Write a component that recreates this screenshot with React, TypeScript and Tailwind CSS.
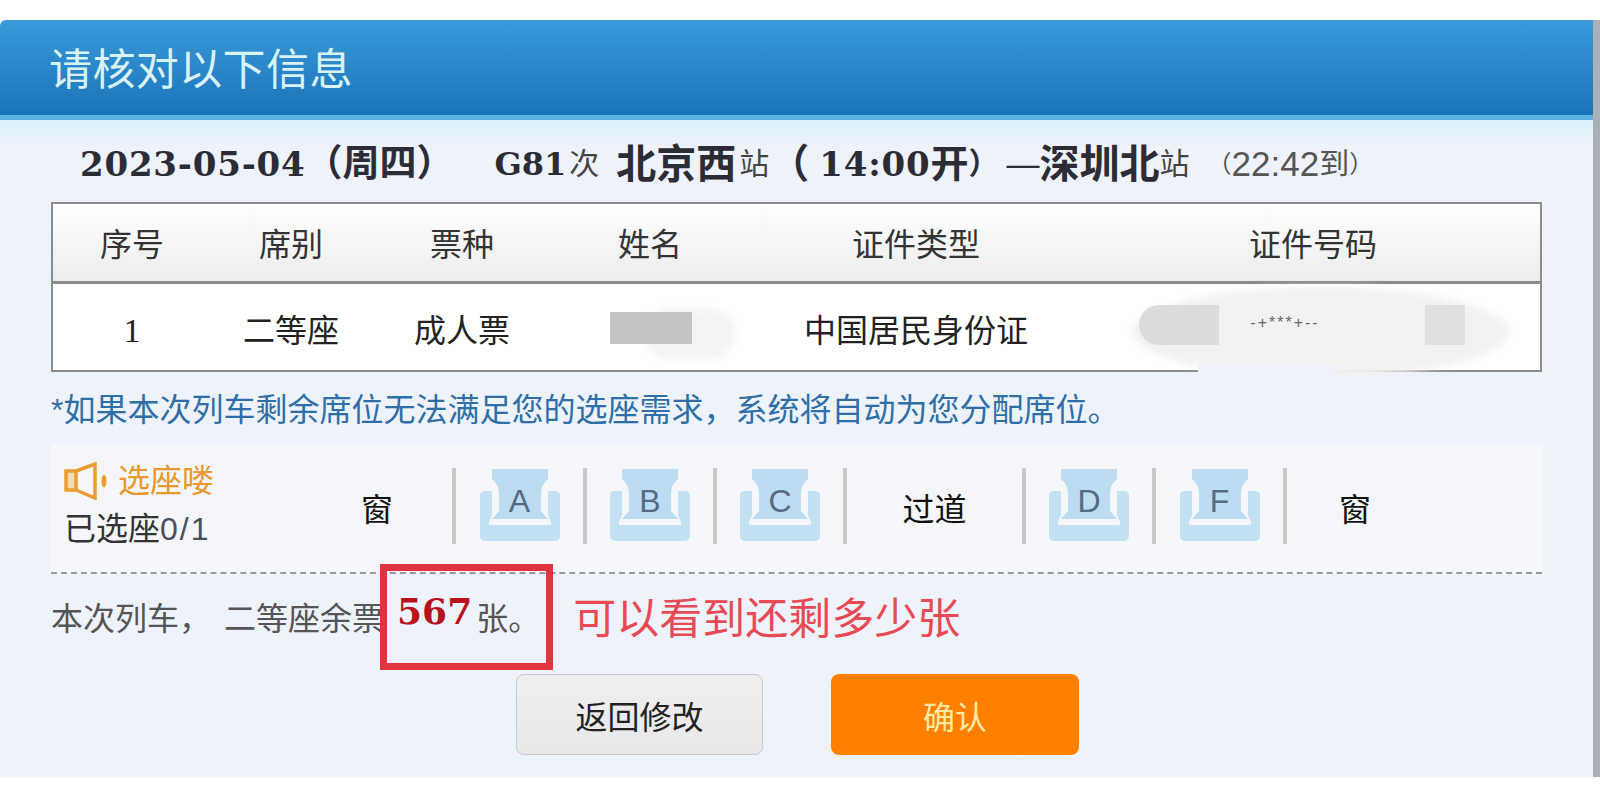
const cjk = "font-['Liberation_Sans','Noto_Sans_CJK_SC',sans-serif]"
const cols = 'grid grid-cols-[158px_160px_182px_194px_338px_456px]'

function Seat({ letter }: { letter: string }) {
  return (
    <div className="relative w-[80px] h-[72px] mb-[7px]">
      <svg width="80" height="72" viewBox="0 0 80 72">
        <path d="M12 0H68V10Q61 16 61 24V42L68 50H12L19 42V24Q19 16 12 10Z" fill="#bcdcf2" />
        <path d="M5 22H12V46L9 53V56H71V53L68 46V22H75Q80 22 80 27V66Q80 72 74 72H6Q0 72 0 66V27Q0 22 5 22Z" fill="#c4e0f3" />
      </svg>
      <span className="absolute left-0 right-0 top-[14px] text-center text-[32px] leading-[36px] text-[#566b82]">{letter}</span>
    </div>
  )
}

function Divider() {
  return <div className="w-[4px] h-[76px] mb-[5px] bg-[#c8c8c8]" />
}

function Speaker() {
  return (
    <svg width="44" height="38" viewBox="0 0 44 38" fill="none" stroke="#eb9c34" strokeWidth="3.5">
      <rect x="2" y="9" width="10" height="19" fill="#f6dcae" />
      <path d="M12 9L31 2V36L12 28" />
      <ellipse cx="40" cy="19" rx="2" ry="6" fill="#eb9c34" strokeWidth="1" />
    </svg>
  )
}

export default function App() {
  return (
    <div className={`h-[800px] overflow-hidden bg-white pt-[20px] text-[32px] leading-[36px] text-[#222] ${cjk}`}>
      <div className="w-full h-[757px] flex border-r-[7px] border-[#aab0b8]">
        <div className="flex-1 flex flex-col bg-[#eef2fa]">
          {/* Title */}
          <div className="h-[95px] shrink-0 flex items-center pl-[49px] pt-[5px] rounded-tl-[6px] bg-gradient-to-b from-[#3a9ad9] to-[#1a74b9] text-[43px] tracking-[0.4px] text-[#d8f2f5]">
            请核对以下信息
          </div>
          <div className="h-[5px] shrink-0 bg-[#5db1e2]" />

          <div className="flex-1 flex flex-col px-[51px] bg-gradient-to-b from-[#d8f1fa] from-0% via-[#eef2fa] via-[4%] to-[#eef2fa]">
            {/* Trip */}
            <div className="h-[82px] shrink-0 flex items-center pt-[6px] pl-[29px] whitespace-nowrap text-[#2c2c36]">
              <span className="font-['DejaVu_Serif'] font-bold text-[34px] tracking-[0.8px]">2023-05-04</span>
              <span className="font-bold text-[37px]">（周四）</span>
              <span className="font-['DejaVu_Serif'] font-bold text-[32px] ml-[41px]">G81</span>
              <span className="text-[30px] text-[#444] ml-[3px]">次</span>
              <span className="font-bold text-[40px] ml-[17px]">北京西</span>
              <span className="text-[30px] text-[#444] ml-[3px]">站</span>
              <span className="font-bold text-[40px]">（</span>
              <span className="font-['DejaVu_Serif'] font-bold text-[34px] tracking-[0.8px] ml-[10px]">14:00</span>
              <span className="font-bold text-[38px]">开</span>
              <span className="font-bold text-[30px]">）</span>
              <span className="text-[33px] ml-[8px]">—</span>
              <span className="font-bold text-[40px]">深圳北</span>
              <span className="text-[30px] text-[#444]">站</span>
              <span className="text-[#555] ml-[18px] flex items-center">
                <span className="text-[24px]">（</span>
                <span className="text-[35px]">22:42</span>
                <span className="text-[30px]">到</span>
                <span className="text-[24px]">）</span>
              </span>
            </div>

            {/* Passenger table */}
            <div className="relative shrink-0 w-[1491px] border-2 border-[#8c8c8c] bg-white">
              <div className={`${cols} h-[80px] pt-[4px] items-center text-center text-[#333] bg-gradient-to-b from-white to-[#ececec] border-b-[3px] border-[#8c8c8c]`}>
                <span>序号</span>
                <span>席别</span>
                <span>票种</span>
                <span>姓名</span>
                <span>证件类型</span>
                <span>证件号码</span>
              </div>
              <div className={`${cols} h-[86px] pt-[8px] items-center text-center`}>
                <span className="font-['Liberation_Serif'] text-[34px]">1</span>
                <span>二等座</span>
                <span>成人票</span>
                <span className="relative h-[40px]">
                  <span className="absolute left-[92px] top-[-2px] w-[90px] h-[50px] rounded-full bg-[#efefef] blur-[3px] opacity-70" />
                  <span className="absolute left-[57px] top-[1px] w-[82px] h-[32px] bg-[#c4c4c4]" />
                </span>
                <span>中国居民身份证</span>
                <span className="relative h-[40px]">
                  <span className="absolute left-[48px] top-[-24px] w-[376px] h-[90px] rounded-[50%] bg-[#f1f1f1] blur-[3px]" />
                  <span className="absolute left-[54px] top-[-6px] w-[80px] h-[40px] rounded-l-full bg-[#dcdcdc]" />
                  <span className="absolute left-[340px] top-[-6px] w-[40px] h-[40px] bg-[#e0e0e0]" />
                  <span className="absolute left-[140px] top-[2px] w-[120px] text-center text-[16px] leading-[20px] text-[#666] tracking-[2px]">-+***+--</span>
                </span>
              </div>
              <div className="absolute left-[1145px] top-[160px] w-[136px] h-[12px] bg-[#eef1f8]" />
            </div>

            {/* Notice */}
            <p className="mt-[20px] text-[#2e6fa8] whitespace-nowrap">*如果本次列车剩余席位无法满足您的选座需求，系统将自动为您分配席位。</p>

            {/* Seat picker */}
            <div className="mt-[16px] h-[130px] w-[1491px] shrink-0 flex items-center bg-[#f5f6f9] border-b-2 border-dashed border-[#9a9a9a] pl-[13px] text-[#111]">
              <div className="w-[238px] shrink-0 mb-[7px]">
                <div className="flex items-center gap-[10px] text-[#e8992e]"><Speaker /><span>选座喽</span></div>
                <div className="mt-[11px] text-[#333]">已选座<span className="text-[#4a4f5c] tracking-[2px]">0/1</span></div>
              </div>
              <div className="w-[150px] mt-[4px] text-center">窗</div>
              <Divider />
              <div className="w-[127px] flex justify-center"><Seat letter="A" /></div>
              <Divider />
              <div className="w-[126px] flex justify-center"><Seat letter="B" /></div>
              <Divider />
              <div className="w-[126px] flex justify-center"><Seat letter="C" /></div>
              <Divider />
              <div className="w-[175px] mt-[4px] text-center">过道</div>
              <Divider />
              <div className="w-[126px] flex justify-center"><Seat letter="D" /></div>
              <Divider />
              <div className="w-[127px] flex justify-center"><Seat letter="F" /></div>
              <Divider />
              <div className="w-[136px] mt-[4px] text-center">窗</div>
            </div>

            {/* Tickets left */}
            <div className="mt-[21px] h-[48px] shrink-0 flex items-center whitespace-nowrap text-[#555]">
              <span>本次列车，</span>
              <span className="ml-[13px]">二等座余票</span>
              <span className="relative flex items-center ml-[13px]">
                <span className="font-['DejaVu_Serif'] font-bold text-[36px] text-[#b8121c] -mt-[16px]">567</span>
                <span className="ml-[4px]">张。</span>
                <span className="absolute left-[-17px] top-[-37px] w-[173px] h-[106px] border-[7px] border-[#e0343e]" />
              </span>
              <span className="ml-[33px] text-[43px] leading-[48px] text-[#e84a55]">可以看到还剩多少张</span>
            </div>

            {/* Actions */}
            <div className="mt-[31px] flex pl-[465px] gap-[68px]">
              <button className="w-[247px] h-[81px] pt-[6px] rounded-[8px] border border-[#c8c8c8] bg-gradient-to-b from-[#efefef] to-[#e8e8e8] text-[#222]">返回修改</button>
              <button className="w-[248px] h-[81px] pt-[6px] rounded-[8px] bg-[#ff8000] text-[#ffeaa8]">确认</button>
            </div>
          </div>
        </div>
      </div>
    </div>
  )
}
